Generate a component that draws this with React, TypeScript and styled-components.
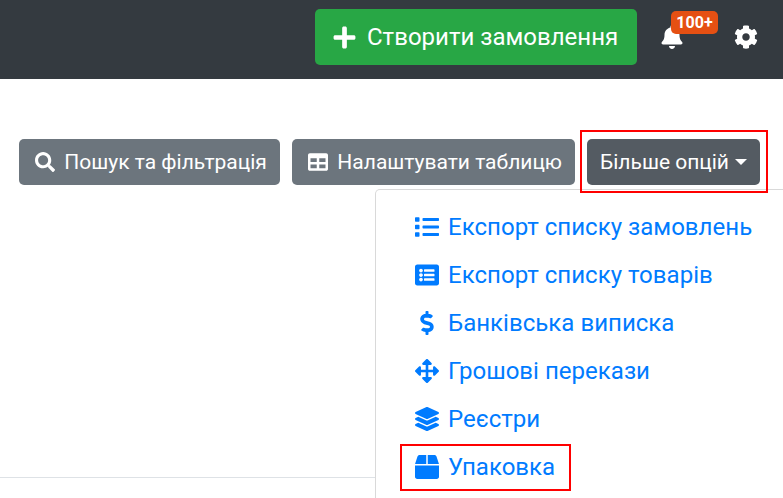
import React from "react";
import styled, { createGlobalStyle } from "styled-components";
import { FaPlus, FaBell, FaCog, FaSearch, FaTable, FaList, FaListAlt, FaDollarSign, FaArrowsAlt, FaLayerGroup, FaBox } from "react-icons/fa";

const Global = createGlobalStyle`
  html, body { margin: 0; padding: 0; background: #fff; overflow: hidden; }
  body { font-family: Roboto, "Liberation Sans", sans-serif; }
  * { box-sizing: border-box; }
`;
const Page = styled.div`
  width: 783px; height: 498px; overflow: hidden; position: relative;
  display: flex; flex-direction: column;
`;
const Header = styled.header`
  height: 79px; background: #343a40; display: flex; align-items: flex-start;
  justify-content: flex-end; padding: 9px 25px 0 0;
`;
const CreateButton = styled.button`
  width: 322px; height: 56px; background: #28a745; color: #fff; border: 0; border-radius: 5px;
  font: 400 24px Roboto, sans-serif; display: flex; align-items: center; gap: 10px; padding: 0 0 0 17px;
  margin-right: 23px; white-space: nowrap;
`;
const BellBox = styled.div`
  position: relative; width: 24px; height: 56px; display: flex; align-items: center; color: #fff; font-size: 24px;
  margin-right: 50px;
`;
const Badge = styled.span`
  position: absolute; left: 11px; top: 2px; width: 47px; height: 23px; background: #e55013; color: #fff;
  border-radius: 5px; font: 700 16px/23px Roboto, sans-serif; text-align: center;
`;
const GearBox = styled.div`
  width: 24px; height: 56px; display: flex; align-items: center; color: #fff; font-size: 24px;
`;
const Toolbar = styled.div`
  display: flex; justify-content: flex-end; align-items: flex-start; gap: 5px; padding: 51px 15px 0 0;
`;
const ButtonGroup = styled.div`
  display: flex; gap: 12px; padding-top: 9px;
`;
const Btn = styled.button<{ $dark?: boolean }>`
  height: 46px; border: 0; border-radius: 5px; color: #fff; background: ${(p) => (p.$dark ? "#545b62" : "#6c757d")};
  font: 400 21px Roboto, sans-serif; display: flex; align-items: center; gap: 9.5px; padding: 0 13px 0 16px;
  white-space: nowrap;
`;
const Frame = styled.div`
  position: relative; z-index: 2; width: 188px; height: 63px; border: 2px solid #f00; padding: 7px 0 0 5px;
`;
const FrameBtn = styled(Btn)`
  width: 173px; padding: 0 0 0 13px; gap: 0;
`;
const Caret = styled.i`
  width: 0; height: 0; border-top: 6px solid #fff; border-left: 6px solid transparent; border-right: 6px solid transparent; margin-left: 6px;
`;
const Menu = styled.div`
  position: absolute; left: 375px; top: 189px; width: 440px; height: 330px; background: #fff;
  border: 1px solid rgba(0,0,0,.15); border-radius: 5px; padding: 13px 0 0 25px;
`;
const MenuItem = styled.a`
  display: flex; align-items: center; height: 48px; color: #007bff; font: 400 24.05px Roboto, sans-serif; white-space: nowrap;
`;
const IconCell = styled.span`
  width: 26px; display: flex; justify-content: center; font-size: 24px; margin: 0 8px 0 13px;
`;
const Marked = styled.div`
  position: absolute; left: 24px; top: 254px; width: 171px; height: 47px; border: 2px solid #f00;
`;
const Spacer = styled.div`flex: 1;`;
const TableLine = styled.div`
  height: 1px; background: #dee2e6; margin-bottom: 20px;
`;

const items: [React.ComponentType, string][] = [
  [FaList, "Експорт списку замовлень"],
  [FaListAlt, "Експорт списку товарів"],
  [FaDollarSign, "Банківська виписка"],
  [FaArrowsAlt, "Грошові перекази"],
  [FaLayerGroup, "Реєстри"],
  [FaBox, "Упаковка"],
];

export default function App() {
  return (
    <Page>
      <Global />
      <Header>
        <CreateButton><FaPlus size={25} />Створити замовлення</CreateButton>
        <BellBox><FaBell /><Badge>100+</Badge></BellBox>
        <GearBox><FaCog /></GearBox>
      </Header>
      <Toolbar>
        <ButtonGroup>
          <Btn><FaSearch size={20} />Пошук та фільтрація</Btn>
          <Btn><FaTable size={20} />Налаштувати таблицю</Btn>
        </ButtonGroup>
        <Frame>
          <FrameBtn $dark>Більше опцій<Caret /></FrameBtn>
        </Frame>
      </Toolbar>
      <Spacer />
      <TableLine />
      <Menu>
        {items.map(([Icon, label]) => (
          <MenuItem key={label}><IconCell><Icon /></IconCell>{label}</MenuItem>
        ))}
        <Marked />
      </Menu>
    </Page>
  );
}
